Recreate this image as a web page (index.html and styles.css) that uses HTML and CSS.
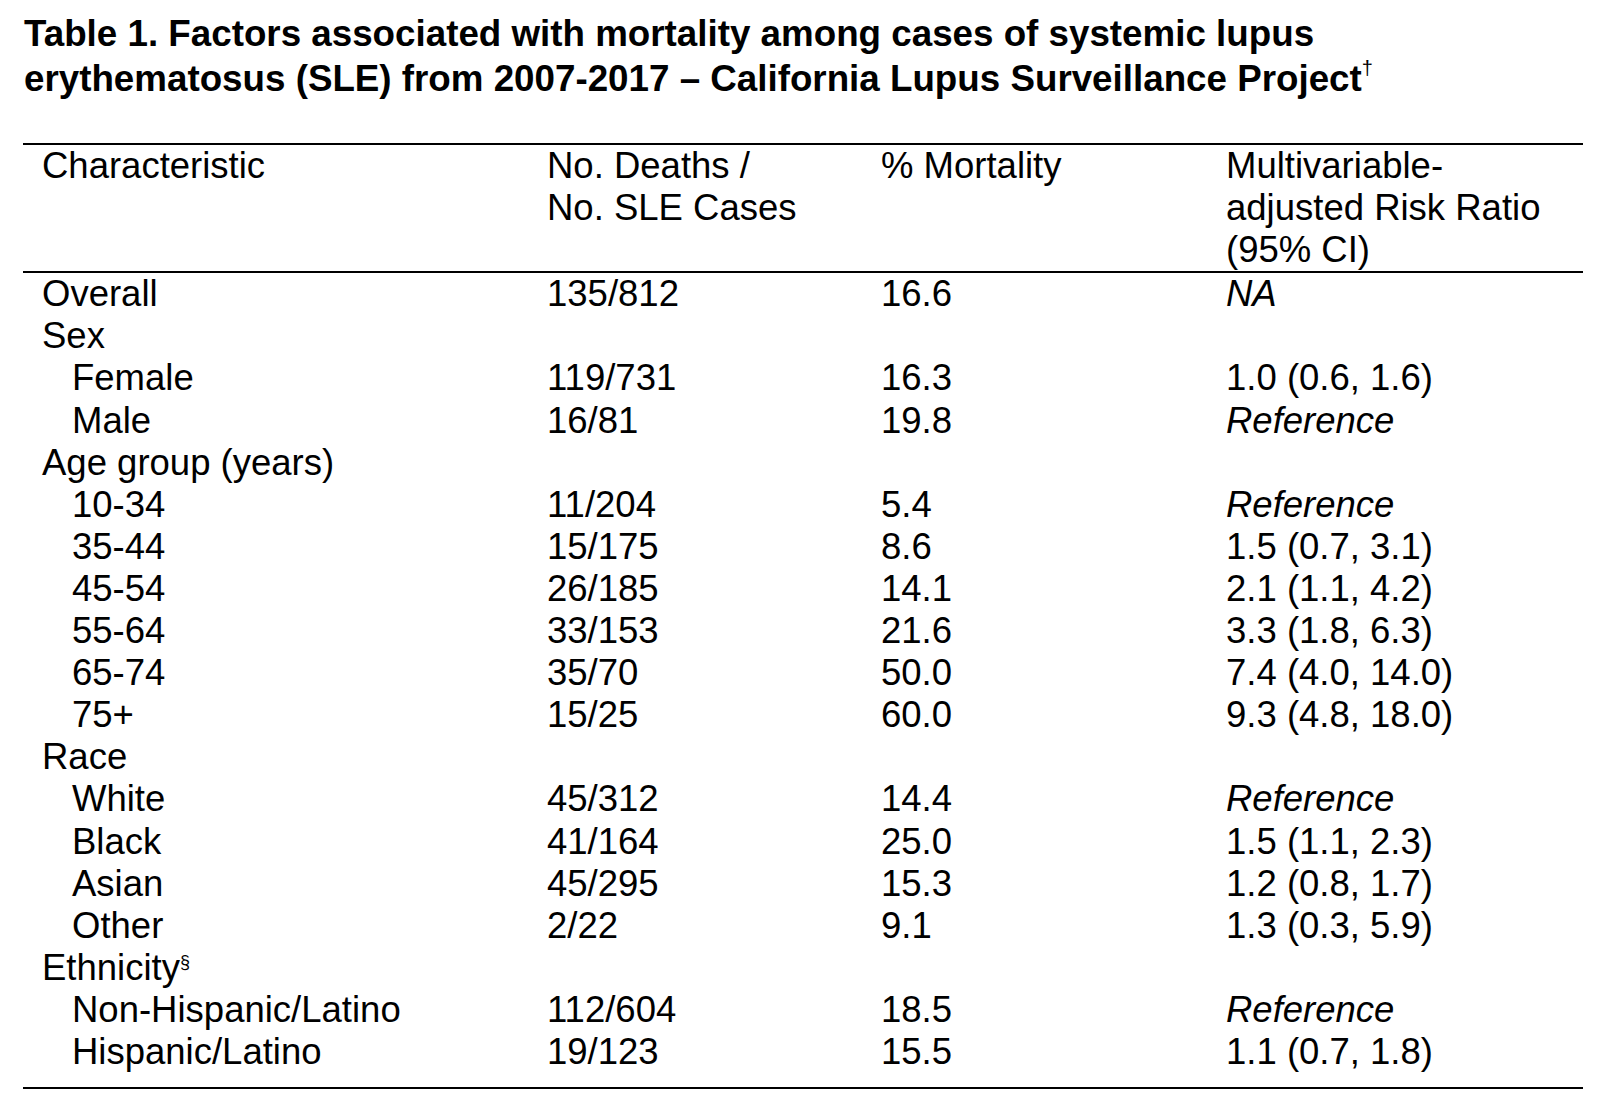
FILE: index.html
```html
<!DOCTYPE html>
<html lang="en">
<head>
<meta charset="utf-8">
<title>Table 1</title>
<link rel="stylesheet" href="styles.css">
</head>
<body>
<div class="page">
  <h1 class="title">Table 1. Factors associated with mortality among cases of systemic lupus erythematosus (SLE) from 2007-2017 – California Lupus Surveillance Project<sup class="dagger">†</sup></h1>
  <table class="data">
    <colgroup>
      <col class="c1"><col class="c2"><col class="c3"><col class="c4">
    </colgroup>
    <thead>
      <tr>
        <th>Characteristic</th>
        <th>No. Deaths /<br>No. SLE Cases</th>
        <th>% Mortality</th>
        <th>Multivariable-<br>adjusted Risk Ratio<br>(95% CI)</th>
      </tr>
    </thead>
    <tbody>
      <tr><td>Overall</td><td>135/812</td><td>16.6</td><td><i>NA</i></td></tr>
      <tr><td>Sex</td><td></td><td></td><td></td></tr>
      <tr><td class="ind">Female</td><td>119/731</td><td>16.3</td><td>1.0 (0.6, 1.6)</td></tr>
      <tr><td class="ind">Male</td><td>16/81</td><td>19.8</td><td><i>Reference</i></td></tr>
      <tr><td>Age group (years)</td><td></td><td></td><td></td></tr>
      <tr><td class="ind">10-34</td><td>11/204</td><td>5.4</td><td><i>Reference</i></td></tr>
      <tr><td class="ind">35-44</td><td>15/175</td><td>8.6</td><td>1.5 (0.7, 3.1)</td></tr>
      <tr><td class="ind">45-54</td><td>26/185</td><td>14.1</td><td>2.1 (1.1, 4.2)</td></tr>
      <tr><td class="ind">55-64</td><td>33/153</td><td>21.6</td><td>3.3 (1.8, 6.3)</td></tr>
      <tr><td class="ind">65-74</td><td>35/70</td><td>50.0</td><td>7.4 (4.0, 14.0)</td></tr>
      <tr><td class="ind">75+</td><td>15/25</td><td>60.0</td><td>9.3 (4.8, 18.0)</td></tr>
      <tr><td>Race</td><td></td><td></td><td></td></tr>
      <tr><td class="ind">White</td><td>45/312</td><td>14.4</td><td><i>Reference</i></td></tr>
      <tr><td class="ind">Black</td><td>41/164</td><td>25.0</td><td>1.5 (1.1, 2.3)</td></tr>
      <tr><td class="ind">Asian</td><td>45/295</td><td>15.3</td><td>1.2 (0.8, 1.7)</td></tr>
      <tr><td class="ind">Other</td><td>2/22</td><td>9.1</td><td>1.3 (0.3, 5.9)</td></tr>
      <tr><td>Ethnicity<sup class="sect">§</sup></td><td></td><td></td><td></td></tr>
      <tr><td class="ind">Non-Hispanic/Latino</td><td>112/604</td><td>18.5</td><td><i>Reference</i></td></tr>
      <tr class="last"><td class="ind">Hispanic/Latino</td><td>19/123</td><td>15.5</td><td>1.1 (0.7, 1.8)</td></tr>
    </tbody>
  </table>
</div>
</body>
</html>
```
FILE: styles.css
```css
html, body {
  margin: 0;
  padding: 0;
  background: #ffffff;
}
body {
  font-family: "Liberation Sans", Arial, sans-serif;
  color: #000000;
  overflow: hidden;
}
.page {
  padding: 11px 0 0 23px;
  width: 1560px;
}
.title {
  margin: 0;
  font-size: 36.75px;
  font-weight: bold;
  line-height: 45px;
  width: 1420px;
  padding-left: 1px;
}
.dagger {
  font-size: 20px;
  vertical-align: 16px;
  line-height: 0;
  font-weight: normal;
}
.data {
  margin-top: 42px;
  width: 1560px;
  border-collapse: collapse;
  table-layout: fixed;
  font-size: 36.5px;
  line-height: 42.1px;
}
.c1 { width: 505px; }
.c2 { width: 334px; }
.c3 { width: 345px; }
.c4 { width: 376px; }
.data th,
.data td {
  padding: 0 0 0 19px;
  text-align: left;
  vertical-align: top;
  font-weight: normal;
  white-space: nowrap;
}
.data thead th {
  border-top: 2px solid #000;
  border-bottom: 2px solid #000;
}
.data td.ind {
  padding-left: 49px;
}
.data tr.last td {
  padding-bottom: 14px;
  border-bottom: 2px solid #000;
}
.sect {
  font-size: 18px;
  vertical-align: 12px;
  line-height: 0;
}
```
